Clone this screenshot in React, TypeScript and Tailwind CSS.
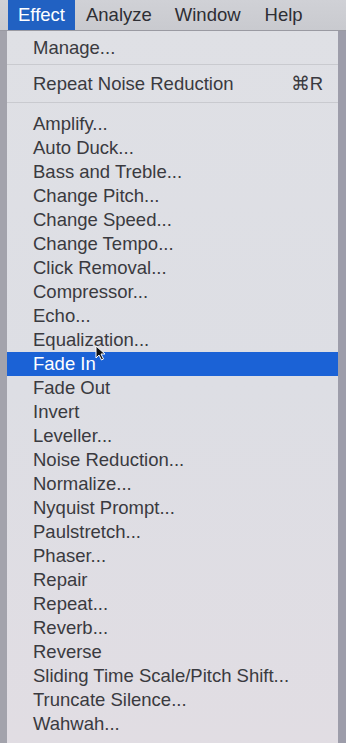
import React from "react";

const items = [
  "Amplify...",
  "Auto Duck...",
  "Bass and Treble...",
  "Change Pitch...",
  "Change Speed...",
  "Change Tempo...",
  "Click Removal...",
  "Compressor...",
  "Echo...",
  "Equalization...",
  "Fade In",
  "Fade Out",
  "Invert",
  "Leveller...",
  "Noise Reduction...",
  "Normalize...",
  "Nyquist Prompt...",
  "Paulstretch...",
  "Phaser...",
  "Repair",
  "Repeat...",
  "Reverb...",
  "Reverse",
  "Sliding Time Scale/Pitch Shift...",
  "Truncate Silence...",
  "Wahwah...",
];

export default function App() {
  return (
    <div
      className="relative w-[346px] h-[743px] overflow-hidden flex flex-col bg-[#a2a2ab]"
      style={{ fontFamily: '"Liberation Sans", Arial, sans-serif' }}
    >
      {/* menu bar */}
      <div className="h-[31px] shrink-0 flex items-stretch bg-gradient-to-b from-[#d0d1d6] to-[#c9cacf] border-b border-[#9a9aa2] text-[18.5px] text-[#2e2e34] pl-[8px]">
        <div className="bg-[#2161c2] text-white px-[10px] flex items-center">Effect</div>
        <div className="px-[11px] flex items-center">Analyze</div>
        <div className="px-[12px] flex items-center">Window</div>
        <div className="px-[12px] flex items-center">Help</div>
      </div>
      {/* body */}
      <div className="flex-1 flex">
        <div className="w-[7px] bg-[#a3a3ac]" />
        <div className="flex-1 bg-gradient-to-b from-[#dfe0e5] via-[#dddee4] to-[#e1dde3] text-[18.5px] text-[#3a3a40] flex flex-col">
          <div className="h-[33px] flex items-center pl-[26px]">Manage...</div>
          <div className="h-px bg-[#c9cacf]" />
          <div className="h-[37px] flex items-center pl-[26px] pr-[15px] justify-between">
            <span>Repeat Noise Reduction</span>
            <span>⌘R</span>
          </div>
          <div className="h-px bg-[#c9cacf]" />
          <div className="pt-[9px] flex flex-col">
            {items.map((t) =>
              t === "Fade In" ? (
                <div key={t} className="h-[24px] flex items-center pl-[26px] bg-[#1b62d6] text-white">
                  {t}
                </div>
              ) : (
                <div key={t} className="h-[24px] flex items-center pl-[26px]">
                  {t}
                </div>
              )
            )}
          </div>
        </div>
        <div className="w-[8px] bg-[#9d9daa]" />
      </div>
      {/* mouse cursor */}
      <svg
        className="absolute left-[95px] top-[345px]"
        width="11"
        height="16"
        viewBox="0 0 11 16"
      >
        <path
          d="M1 1 L1 13 L4 10 L6.5 15 L8.5 14 L6 9 L10 9 Z"
          fill="#111"
          stroke="#fff"
          strokeWidth="1"
          strokeLinejoin="round"
        />
      </svg>
    </div>
  );
}
